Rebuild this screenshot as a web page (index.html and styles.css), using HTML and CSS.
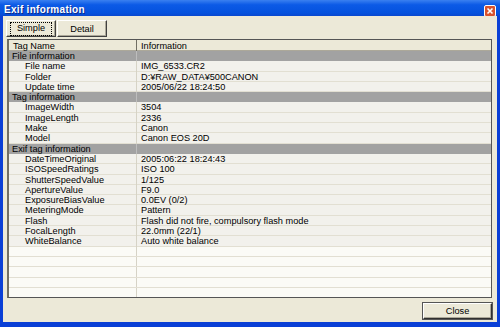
FILE: index.html
```html
<!DOCTYPE html>
<html lang="en">
<head>
    <meta charset="UTF-8">
    <title>Exif information</title>
    <link rel="stylesheet" href="styles.css">
</head>
<body>
    <div class="window">
        <div class="titlebar">
            <span class="title">Exif information</span>
            <span class="close-x">
                <svg width="12" height="12" viewBox="0 0 12 12">
                    <rect x="0.5" y="0.5" width="11" height="11" rx="1.5" fill="#d8532f" stroke="#fff"/>
                    <path d="M3.5 3.5 L8.5 8.5 M8.5 3.5 L3.5 8.5" stroke="#fff" stroke-width="1.6"/>
                </svg>
            </span>
        </div>
        <div class="body">
            <div class="tabs">
                <button class="tab"><span class="focus">Simple</span></button>
                <button class="tab">Detail</button>
            </div>
            <div class="list">
                <div class="row head"><div>Tag Name</div><div>Information</div></div>
                <div class="row group"><div>File information</div><div></div></div>
                <div class="row"><div>File name</div><div>IMG_6533.CR2</div></div>
                <div class="row"><div>Folder</div><div>D:¥RAW_DATA¥500CANON</div></div>
                <div class="row"><div>Update time</div><div>2005/06/22 18:24:50</div></div>
                <div class="row group"><div>Tag information</div><div></div></div>
                <div class="row"><div>ImageWidth</div><div>3504</div></div>
                <div class="row"><div>ImageLength</div><div>2336</div></div>
                <div class="row"><div>Make</div><div>Canon</div></div>
                <div class="row"><div>Model</div><div>Canon EOS 20D</div></div>
                <div class="row group"><div>Exif tag information</div><div></div></div>
                <div class="row"><div>DateTimeOriginal</div><div>2005:06:22 18:24:43</div></div>
                <div class="row"><div>ISOSpeedRatings</div><div>ISO 100</div></div>
                <div class="row"><div>ShutterSpeedValue</div><div>1/125</div></div>
                <div class="row"><div>ApertureValue</div><div>F9.0</div></div>
                <div class="row"><div>ExposureBiasValue</div><div>0.0EV (0/2)</div></div>
                <div class="row"><div>MeteringMode</div><div>Pattern</div></div>
                <div class="row"><div>Flash</div><div>Flash did not fire, compulsory flash mode</div></div>
                <div class="row"><div>FocalLength</div><div>22.0mm (22/1)</div></div>
                <div class="row"><div>WhiteBalance</div><div>Auto white balance</div></div>
                <div class="row empty"><div></div><div></div></div>
                <div class="row empty"><div></div><div></div></div>
                <div class="row empty"><div></div><div></div></div>
                <div class="row empty"><div></div><div></div></div>
                <div class="row empty"><div></div><div></div></div>
            </div>
            <div class="footer">
                <button class="btn">Close</button>
            </div>
        </div>
    </div>
</body>
</html>
```

FILE: styles.css
```css
body {
    margin: 0;
    font-family: "Liberation Sans", Arial, sans-serif;
    font-size: 9.2px;
    color: #000;
    background: #fff;
}
.window {
    width: 500px;
    height: 327px;
    display: flex;
    flex-direction: column;
    background: #0a3fd6;
}
.titlebar {
    height: 16px;
    display: flex;
    align-items: center;
    justify-content: space-between;
    padding: 0 4px 0 4px;
    background: linear-gradient(#3a80f0, #0c5ae6 30%, #0552de 80%, #0a48cf);
}
.title {
    color: #fff;
    font-weight: bold;
    font-size: 10px;
    letter-spacing: 0.3px;
    margin-top: 2px;
    text-shadow: 1px 1px 0 #0a2a8a;
}
.close-x {
    display: flex;
    margin-top: 5px;
}
.body {
    flex: 1;
    margin: 0 3px 5px 3px;
    background: #ece9d8;
    display: flex;
    flex-direction: column;
    padding: 4px 5px 3px 3px;
}
.tabs {
    display: flex;
    gap: 1px;
    height: 17px;
}
.tab {
    width: 50px;
    height: 17px;
    padding: 0;
    font: inherit;
    background: #ece9d8;
    border: 1px solid;
    border-color: #fff #404040 #404040 #fff;
    box-shadow: inset -1px -1px 0 #aca899;
    display: flex;
    align-items: center;
    justify-content: center;
}
.focus {
    width: 40px;
    border: 1px dotted #000;
    padding: 1px 0 2px;
    line-height: 9px;
}
.list {
    margin: 2px 0 0 1px;
    height: 259px;
    box-sizing: border-box;
    border: 1px solid #555;
    border-left: 2px solid #716f64;
    background: #fbfbf6;
    overflow: hidden;
}
.row {
    display: grid;
    grid-template-columns: 128px 1fr;
    height: 10.3px;
    line-height: 11px;
    box-sizing: border-box;
    border-bottom: 1px solid #e2dfd2;
    background: #f2f1ec;
}
.row > div {
    padding-left: 16px;
    border-right: 1px solid #d6d3c6;
    white-space: nowrap;
}
.row > div:last-child {
    padding-left: 4px;
    border-right: none;
}
.row.head {
    height: 11px;
    line-height: 12px;
    background: #ece9d8;
    border-bottom: 1px solid #aca899;
}
.row.head > div {
    padding-left: 4px;
    border-right: 1px solid #716f64;
}
.row.head > div:last-child {
    border-right: none;
}
.row.group {
    background: #a2a2a2;
    border-bottom-color: #a2a2a2;
}
.row.group > div {
    padding-left: 3px;
    border-right-color: #bdbdbd;
}
.row.empty {
    background: #fbfbf6;
}
.footer {
    display: flex;
    justify-content: flex-end;
    margin-top: 5px;
}
.btn {
    width: 69px;
    height: 16px;
    padding: 0;
    font: inherit;
    background: #ece9d8;
    border: 1px solid;
    border-color: #fff #303030 #303030 #fff;
    box-shadow: inset -1px -1px 0 #aca899, 0 0 0 1px #555;
}
```
